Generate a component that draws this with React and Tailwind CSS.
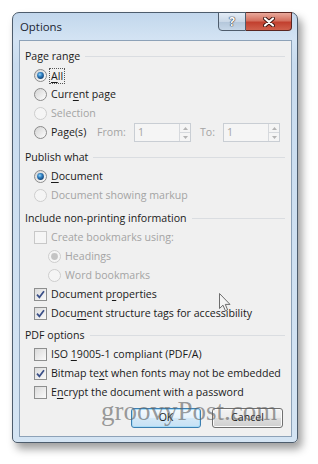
import React from "react";

function Radio({ checked, disabled }) {
  return (
    <svg width="13" height="13" viewBox="0 0 13 13" className="shrink-0">
      <defs>
        <linearGradient id="rfill" x1="0" y1="0" x2="1" y2="1">
          <stop offset="0" stopColor="#d2d2d2" />
          <stop offset="1" stopColor="#ffffff" />
        </linearGradient>
        <radialGradient id="rdot" cx="0.4" cy="0.35" r="0.7">
          <stop offset="0" stopColor="#9ad8f6" />
          <stop offset="0.45" stopColor="#2f7fc2" />
          <stop offset="1" stopColor="#123f6e" />
        </radialGradient>
      </defs>
      <circle
        cx="6.5"
        cy="6.5"
        r="6"
        fill={disabled ? "#f5f5f5" : "url(#rfill)"}
        stroke={disabled ? "#cdcdcd" : "#8b8b8b"}
      />
      {checked && (
        <circle cx="6.5" cy="6.5" r="3.4" fill={disabled ? "#c4c4c4" : "url(#rdot)"} />
      )}
    </svg>
  );
}

function Check({ checked, disabled }) {
  return (
    <svg width="13" height="13" viewBox="0 0 13 13" className="shrink-0">
      <defs>
        <linearGradient id="cfill" x1="0" y1="0" x2="1" y2="1">
          <stop offset="0" stopColor="#d9d9d9" />
          <stop offset="1" stopColor="#fcfcfc" />
        </linearGradient>
      </defs>
      <rect
        x="0.5"
        y="0.5"
        width="12"
        height="12"
        fill={disabled ? "#f5f5f5" : "url(#cfill)"}
        stroke={disabled ? "#c8c8c8" : "#8e8f8f"}
      />
      {checked && (
        <path d="M3 6.6 L5.4 9.3 L10 3.2" stroke="#3a4f88" strokeWidth="1.7" fill="none" />
      )}
    </svg>
  );
}

function Header({ children, className = "" }) {
  return (
    <div className={`flex h-[19px] items-center gap-[5px] pl-[5px] pr-[6px] ${className}`}>
      <span className="text-[#1a1a1a]">{children}</span>
      <span className="h-px flex-1 bg-[#dadde1]" />
    </div>
  );
}

function Option({ type = "radio", checked, disabled, indent = "pl-[14px]", children }) {
  return (
    <div className={`flex h-[19px] items-center gap-[4px] ${indent}`}>
      {type === "radio" ? (
        <Radio checked={checked} disabled={disabled} />
      ) : (
        <Check checked={checked} disabled={disabled} />
      )}
      <span className={disabled ? "text-[#a4a4a4]" : "text-[#1a1a1a]"}>{children}</span>
    </div>
  );
}

function Spin() {
  return (
    <div className="flex h-[19px] w-[57px] border border-[#c9ced4] bg-[#f5f5f5]">
      <span className="flex-1 pl-[3px] leading-[17px] text-[#a4a4a4]">1</span>
      <div className="flex w-[11px] flex-col border-l border-[#d6d9dd]">
        <span className="flex flex-1 items-center justify-center border-b border-[#d6d9dd]">
          <svg width="5" height="3" viewBox="0 0 5 3">
            <path d="M0 3 L2.5 0 L5 3Z" fill="#b4b4b4" />
          </svg>
        </span>
        <span className="flex flex-1 items-center justify-center">
          <svg width="5" height="3" viewBox="0 0 5 3">
            <path d="M0 0 L2.5 3 L5 0Z" fill="#b4b4b4" />
          </svg>
        </span>
      </div>
    </div>
  );
}

function U({ children }) {
  return <span className="underline decoration-1 underline-offset-[2px]">{children}</span>;
}

export default function App() {
  return (
    <div className="h-[464px] w-[318px] overflow-hidden bg-white pl-[12px] pt-[12px] font-['Open_Sans',sans-serif] text-[10.6px]">
      <div className="relative flex h-[431px] w-[286px] flex-col rounded-t-[7px] rounded-b-[5px] border border-[#4d5c6c] bg-[linear-gradient(180deg,#c2d7ec_0%,#d3e3f3_6%,#c9dcef_12%,#d4e4f3_100%)] pl-[6px] pr-[5px] pb-[5px] shadow-[4px_6px_9px_rgba(0,0,0,0.38)]">
        <div className="flex h-[27px] items-start justify-between">
          <span className="mt-[5px] pl-[1px] text-[11.4px] text-[#1b2533]">Options</span>
          <div className="-mt-px flex">
            <div className="flex h-[19px] w-[28px] items-center justify-center rounded-bl-[4px] border border-[#4f5d6d] bg-[linear-gradient(180deg,#e3ecf6_0%,#cad8e7_50%,#b3c6da_51%,#c6d7e8_100%)]">
              <span className="text-[12px] font-bold leading-none text-white [text-shadow:0_0_1px_#2c3440,0_0_1px_#2c3440,0_0_1px_#2c3440]">
                ?
              </span>
            </div>
            <div className="flex h-[19px] w-[46px] items-center justify-center rounded-br-[4px] border border-l-0 border-[#5a2621] bg-[linear-gradient(180deg,#e9a99b_0%,#d4705f_45%,#c2402f_55%,#d0604c_100%)]">
              <svg width="12" height="10" viewBox="0 0 12 10">
                <path d="M2 1.5 L10 8.5 M10 1.5 L2 8.5" stroke="#3a1410" strokeWidth="4" strokeLinecap="round" />
                <path d="M2 1.5 L10 8.5 M10 1.5 L2 8.5" stroke="#ffffff" strokeWidth="2.2" strokeLinecap="round" />
              </svg>
            </div>
          </div>
        </div>

        <div className="relative flex flex-1 flex-col border border-[#8da2b8] bg-[#f0f0f0] pt-[6px]">
          <Header>Page range</Header>
          <div className="flex h-[19px] items-center gap-[4px] pl-[14px]">
            <Radio checked />
            <span className="-ml-[2px] border border-dotted border-[#555] px-[1px] leading-[14px] text-[#1a1a1a]">
              <U>A</U>ll
            </span>
          </div>
          <Option>
            Curr<U>e</U>nt page
          </Option>
          <Option disabled>Selection</Option>
          <div className="flex h-[19px] items-center gap-[4px] pl-[14px]">
            <Radio />
            <span className="w-[42px] text-[#1a1a1a]">
              Pa<U>g</U>e(s)
            </span>
            <span className="w-[33px] text-[#a4a4a4]">From:</span>
            <Spin />
            <span className="ml-[5px] w-[19px] text-[#a4a4a4]">To:</span>
            <Spin />
          </div>

          <Header className="mt-[6px]">Publish what</Header>
          <Option checked>
            <U>D</U>ocument
          </Option>
          <Option disabled>Document showing markup</Option>

          <Header className="mt-[4px]">Include non-printing information</Header>
          <Option type="check" disabled>
            Create bookmarks using:
          </Option>
          <Option disabled checked indent="pl-[28px]">
            Headings
          </Option>
          <Option disabled indent="pl-[28px]">
            Word bookmarks
          </Option>
          <Option type="check" checked>
            Document p<U>r</U>operties
          </Option>
          <Option type="check" checked>
            Docu<U>m</U>ent structure tags for accessibility
          </Option>

          <Header className="mt-[3px]">PDF options</Header>
          <Option type="check">
            ISO <U>1</U>9005-1 compliant (PDF/A)
          </Option>
          <Option type="check" checked>
            Bitmap te<U>x</U>t when fonts may not be embedded
          </Option>
          <Option type="check">
            E<U>n</U>crypt the document with a password
          </Option>

          <div className="mt-[6px] flex justify-end gap-[11px] pr-[8px]">
            <button className="h-[20px] w-[70px] rounded-[3px] border border-[#3c7fb1] bg-[linear-gradient(180deg,#f4fafe_0%,#e6f2fb_48%,#d3e8f7_52%,#c6e1f5_100%)] text-[#1a1a1a] shadow-[inset_0_0_0_1px_#a9dcf7]">
              OK
            </button>
            <button className="h-[20px] w-[71px] rounded-[3px] border border-[#707070] bg-[linear-gradient(180deg,#f3f3f3_0%,#ebebeb_48%,#dddddd_52%,#cfcfcf_100%)] text-[#1a1a1a] shadow-[inset_0_0_0_1px_#fbfbfb]">
              Cancel
            </button>
          </div>

          <span className="pointer-events-none absolute left-[81px] top-[357px] font-['Liberation_Serif',serif] text-[27px] leading-none text-[rgba(95,95,95,0.62)]">
            groovyPost.com
          </span>

          <svg
            className="pointer-events-none absolute left-[199px] top-[252px]"
            width="13"
            height="19"
            viewBox="0 0 13 19"
          >
            <path
              d="M0.5 0.5 L0.5 15.5 L4 12.2 L6.4 17.8 L8.6 16.9 L6.3 11.4 L11 11.4 Z"
              fill="#f4f4f4"
              stroke="#6d6d6d"
              strokeWidth="1"
              strokeLinejoin="round"
            />
          </svg>
        </div>
      </div>
    </div>
  );
}
